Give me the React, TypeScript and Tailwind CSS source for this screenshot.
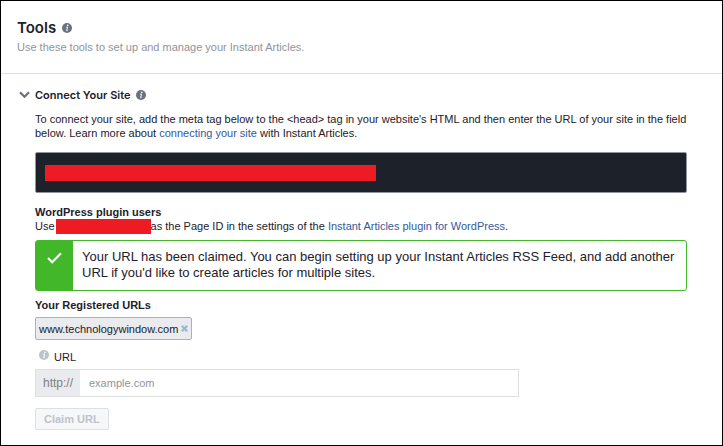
import { useState } from 'react';

interface InfoIconProps {
  className?: string;
}

function InfoIcon({ className }: InfoIconProps) {
  return (
    <svg className={className} width="10" height="10" viewBox="0 0 10 10" aria-hidden="true">
      <circle cx="5" cy="5" r="5" fill="currentColor" />
      <circle cx="5.8" cy="2.4" r="0.8" fill="white" />
      <path d="M4.2 4.2h1.3L4.7 7.7h0.9" fill="none" stroke="white" strokeWidth="1" />
    </svg>
  );
}

function ChevronIcon() {
  return (
    <svg className="text-[#6a7180]" width="11" height="8" viewBox="0 0 11 8" aria-hidden="true">
      <path d="M1 1.2l4.5 4.6L10 1.2" fill="none" stroke="currentColor" strokeWidth="2.2" />
    </svg>
  );
}

function CheckIcon() {
  return (
    <svg width="15" height="12" viewBox="0 0 15 12" aria-hidden="true">
      <path d="M1 6l4.2 4.2L14 1.3" fill="none" stroke="white" strokeWidth="2.2" />
    </svg>
  );
}

function CloseIcon() {
  return (
    <svg width="7" height="7" viewBox="0 0 7 7" aria-hidden="true">
      <path d="M0.8 0.8l5.4 5.4M6.2 0.8L0.8 6.2" fill="none" stroke="currentColor" strokeWidth="2.2" />
    </svg>
  );
}

export default function App() {
  const [urls, setUrls] = useState<string[]>(['www.technologywindow.com']);
  const [url, setUrl] = useState('');

  return (
    <main className="min-h-screen border border-black bg-white font-['Liberation_Sans',Arial,sans-serif] text-[11px] leading-[14px] text-[#1d2129]">
      <header className="border-b border-[#dddfe2] px-4 pt-[17px] pb-[18px]">
        <div className="flex items-center gap-[6px]">
          <h1 className="font-[Inter,sans-serif] text-[15px] leading-5 font-semibold">Tools</h1>
          <InfoIcon className="text-[#6a7180]" />
        </div>
        <p className="mt-[2px] leading-[15px] text-[#90949c]">
          Use these tools to set up and manage your Instant Articles.
        </p>
      </header>

      <section className="pt-[14px] pr-[35px] pb-[15px] pl-[34px]">
        <div className="-ml-4 flex items-center">
          <button type="button" className="w-4" aria-label="Collapse section">
            <ChevronIcon />
          </button>
          <h2 className="font-[Inter,sans-serif] font-semibold">Connect Your Site</h2>
          <InfoIcon className="ml-[6px] text-[#6a7180]" />
        </div>

        <p className="mt-[10px]">
          To connect your site, add the meta tag below to the &lt;head&gt; tag in your website's HTML and then enter the URL of your site in the field below. Learn more about{' '}
          <a href="#connect" className="text-[#365899]">connecting your site</a> with Instant Articles.
        </p>

        <div className="mt-3 flex h-[41px] items-center rounded-[2px] border border-[#90949c] bg-[#1d2129] px-[9px]">
          <div className="h-4 w-[331px] bg-[#ed1c24]" />
        </div>

        <h3 className="mt-3 font-bold">WordPress plugin users</h3>
        <p className="flex h-[14px] items-center">
          Use
          <span className="ml-px h-[15px] w-[95px] shrink-0 bg-[#ed1c24]" />
          <span>
            as the Page ID in the settings of the{' '}
            <a href="#plugin" className="text-[#365899]">Instant Articles plugin for WordPress</a>.
          </span>
        </p>

        <div role="status" className="mt-[7px] flex rounded-[3px] border border-[#42b72a] text-[13px] leading-4">
          <div className="flex w-[37px] shrink-0 justify-center bg-[#42b72a] pt-[11px]">
            <CheckIcon />
          </div>
          <p className="pt-2 pr-2 pb-[9px] pl-[9px]">
            Your URL has been claimed. You can begin setting up your Instant Articles RSS Feed, and add another URL if you'd like to create articles for multiple sites.
          </p>
        </div>

        <h3 className="mt-[7px] font-bold">Your Registered URLs</h3>
        <div className="mt-[5px] flex gap-1">
          {urls.map((item) => (
            <span key={item} className="flex h-[23px] items-center gap-[3px] rounded-[2px] border border-[#9cb4d8] bg-[#e9ebee] px-[3px]">
              {item}
              <button
                type="button"
                className="text-[#9cb4d8]"
                aria-label={`Remove ${item}`}
                onClick={() => setUrls(urls.filter((u) => u !== item))}
              >
                <CloseIcon />
              </button>
            </span>
          ))}
        </div>

        <div className="mt-[10px] flex items-start gap-[5px] pl-1">
          <InfoIcon className="text-[#bec3c9]" />
          <label htmlFor="site-url">URL</label>
        </div>
        <div className="mt-[5px] flex h-7 max-w-[484px] border border-[#dddfe2]">
          <span className="flex w-11 shrink-0 items-center justify-center bg-[#e9ebee] text-[12px] text-[#7f7f7f]">http://</span>
          <input
            id="site-url"
            type="text"
            value={url}
            onChange={(e) => setUrl(e.target.value)}
            placeholder="example.com"
            className="min-w-0 flex-1 px-[9px] outline-none placeholder:text-[#90949c]"
          />
        </div>

        <button
          type="button"
          disabled={!url}
          className="mt-[11px] h-[22px] rounded-[2px] border border-[#dddfe2] bg-[#f6f7f9] px-2 font-bold text-[#4b4f56] disabled:text-[#bec3c9]"
        >
          Claim URL
        </button>
      </section>
    </main>
  );
}
